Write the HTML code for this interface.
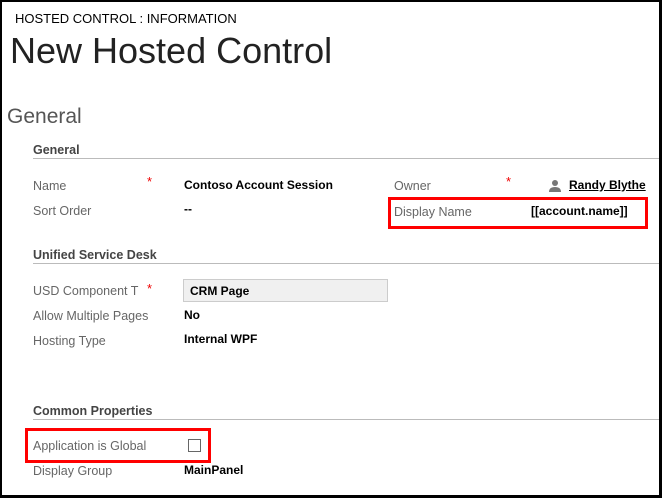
<!DOCTYPE html>
<html><head><style>
html,body{margin:0;padding:0}
body{width:662px;height:498px;position:relative;overflow:hidden;background:#fff;font-family:"Liberation Sans",sans-serif}
.frame{position:absolute;left:0;top:0;border:2px solid #000;border-right-width:3px;border-bottom-width:3px;box-sizing:border-box;width:662px;height:498px}
.t{position:absolute;white-space:nowrap;line-height:1}
.lab{font-size:12.5px;color:#666}
.val{font-size:12px;color:#000;font-weight:bold}
.sec{font-size:12.5px;color:#444;font-weight:bold}
.line{position:absolute;height:1px;background:#bbb;left:33px;right:0}
.star{color:#e00;font-size:13px;position:absolute}
.red{position:absolute;border:3px solid #f00;box-sizing:border-box}
</style></head><body>
<div class="t" style="left:15px;top:12px;font-size:13px;color:#000">HOSTED CONTROL : INFORMATION</div>
<div class="t" style="left:10px;top:33px;font-size:36px;color:#222;font-weight:300">New Hosted Control</div>
<div class="t" style="left:7px;top:106px;font-size:21px;color:#555">General</div>
<div class="t sec" style="left:33px;top:144px">General</div>
<div class="line" style="top:158px"></div>
<div class="t lab" style="left:33px;top:180px">Name</div>
<div class="star" style="left:147px;top:174px">*</div>
<div class="t val" style="left:184px;top:179px">Contoso Account Session</div>
<div class="t lab" style="left:33px;top:205px">Sort Order</div>
<div class="t val" style="left:184px;top:203px">--</div>
<div class="t lab" style="left:394px;top:180px">Owner</div>
<div class="star" style="left:506px;top:174px">*</div>
<svg style="position:absolute;left:548px;top:179px" width="14" height="14" viewBox="0 0 14 14"><circle cx="7" cy="4" r="3" fill="#777"/><path d="M1 13 Q1 8 7 8 Q13 8 13 13Z" fill="#777"/></svg>
<div class="t val" style="left:569px;top:179px;text-decoration:underline">Randy Blythe</div>
<div class="t lab" style="left:394px;top:206px">Display Name</div>
<div class="t val" style="left:531px;top:205px">[[account.name]]</div>
<div class="red" style="left:388px;top:197px;width:260px;height:32px"></div>
<div class="t sec" style="left:33px;top:249px">Unified Service Desk</div>
<div class="line" style="top:263px"></div>
<div class="t lab" style="left:33px;top:285px">USD Component T</div>
<div class="star" style="left:147px;top:281px">*</div>
<div style="position:absolute;left:183px;top:279px;width:205px;height:23px;background:#f0f0f0;border:1px solid #ccc;box-sizing:border-box"></div>
<div class="t val" style="left:190px;top:285px">CRM Page</div>
<div class="t lab" style="left:33px;top:310px">Allow Multiple Pages</div>
<div class="t val" style="left:184px;top:309px">No</div>
<div class="t lab" style="left:33px;top:335px">Hosting Type</div>
<div class="t val" style="left:184px;top:333px">Internal WPF</div>
<div class="t sec" style="left:33px;top:405px">Common Properties</div>
<div class="line" style="top:419px"></div>
<div class="t lab" style="left:33px;top:440px">Application is Global</div>
<div style="position:absolute;left:188px;top:439px;width:13px;height:13px;border:1px solid #666;box-sizing:border-box"></div>
<div class="red" style="left:25px;top:428px;width:186px;height:35px"></div>
<div class="t lab" style="left:33px;top:465px">Display Group</div>
<div class="t val" style="left:184px;top:464px">MainPanel</div>
<div class="frame"></div>
</body></html>
